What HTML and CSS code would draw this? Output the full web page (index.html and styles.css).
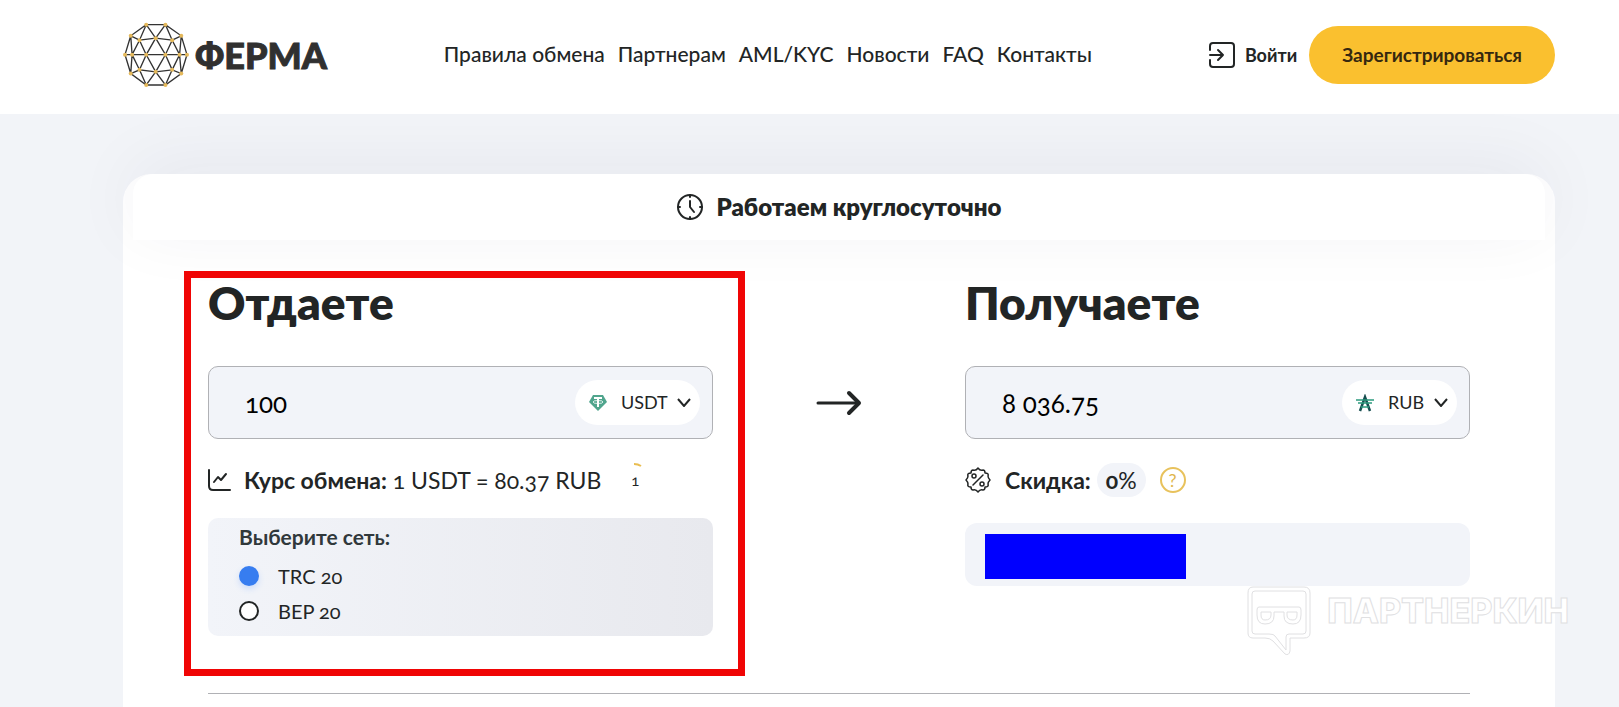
FILE: index.html
```
<!DOCTYPE html>
<html lang="ru">
<head>
    <meta charset="UTF-8">
    <meta name="viewport" content="width=device-width, initial-scale=1.0">
    <title>Ферма</title>
    <link rel="stylesheet" href="styles.css">
</head>
<body>
    <header class="header">
        <a class="logo" href="#">
            <svg class="logo-icon" viewBox="70 66 196 196" aria-hidden="true">
                <path class="logo-lines" d="M139 74H196L243 107L260 163L243 219L196 253H139L93 219L76 163L93 107ZM76 163H260M139 74L119 120L93 107M139 74L167 114L196 74L216 120L243 107M119 120L167 114L216 120M93 107L97 163L93 219M119 120L97 163M76 163L93 107M119 120L139 163L167 114L196 163L216 120L238 163L243 107M97 163L119 208L93 219M119 208L139 163L167 214L196 163L216 208L238 163L243 219L216 208L167 214L119 208L139 253L167 214L196 253L216 208"/>
                <g class="logo-dots">
                    <circle cx="139" cy="74" r="6"/><circle cx="196" cy="74" r="6"/>
                    <circle cx="93" cy="107" r="6"/><circle cx="167" cy="114" r="6"/><circle cx="243" cy="107" r="6"/>
                    <circle cx="119" cy="120" r="6"/><circle cx="216" cy="120" r="6"/>
                    <circle cx="76" cy="163" r="6"/><circle cx="97" cy="163" r="6"/><circle cx="139" cy="163" r="6"/>
                    <circle cx="196" cy="163" r="6"/><circle cx="238" cy="163" r="6"/><circle cx="260" cy="163" r="6"/>
                    <circle cx="119" cy="208" r="6"/><circle cx="216" cy="208" r="6"/>
                    <circle cx="93" cy="219" r="6"/><circle cx="167" cy="214" r="6"/><circle cx="243" cy="219" r="6"/>
                    <circle cx="139" cy="253" r="6"/><circle cx="196" cy="253" r="6"/>
                </g>
            </svg>
            <span class="logo-text">ФЕРМА</span>
        </a>
        <nav class="nav">
            <a href="#">Правила обмена</a>
            <a href="#">Партнерам</a>
            <a href="#">AML/KYC</a>
            <a href="#">Новости</a>
            <a href="#">FAQ</a>
            <a href="#">Контакты</a>
        </nav>
        <div class="actions">
            <a class="login" href="#">
                <svg class="icon" viewBox="0 0 26 26" aria-hidden="true"><path d="M1 8V4Q1 1 4 1H22Q25 1 25 4V22Q25 25 22 25H4Q1 25 1 22V18M1 13H14M9 8L14 13L9 18"/></svg>
                Войти
            </a>
            <button class="register" type="button">Зарегистрироваться</button>
        </div>
    </header>

    <main class="main">
        <section class="card">
            <div class="banner">
                <svg class="icon clock" viewBox="0 0 26 26" aria-hidden="true"><circle cx="13" cy="13" r="12"/><path d="M13 1V3M13 23V25M1 13H3M23 13H25M13 7V13L17 18"/></svg>
                Работаем круглосуточно
            </div>

            <form class="exchange">
                <div class="column column-marked">
                    <h2><label for="give">Отдаете</label></h2>
                    <div class="field">
                        <input class="amount" type="text" id="give" value="100">
                        <div class="currency">
                            <svg class="coin" viewBox="0 0 18 18" aria-hidden="true"><path fill="#50a58d" d="M4 1H14L18 8L9 17L0 8Z"/><path fill="#fff" d="M5 3H13V5H10V13H8V5H5Z"/><ellipse cx="9" cy="8" rx="5" ry="1.5" fill="none" stroke="#fff" stroke-width=".8"/></svg>
                            <select aria-label="Валюта отправки"><option>USDT</option></select>
                            <svg class="chevron" viewBox="0 0 14 9" aria-hidden="true"><path d="M1 1L7 8L13 1"/></svg>
                        </div>
                    </div>
                    <div class="info">
                        <svg class="icon chart" viewBox="0 0 24 24" aria-hidden="true"><path d="M1 2V18Q1 22 5 22H22M6 14L10 9L13 12L18 6"/></svg>
                        <span><b>Курс обмена:</b> 1 USDT = 80.37 RUB</span>
                        <span class="timer">
                            <svg class="timer-arc" viewBox="0 0 36 36" aria-hidden="true"><path d="M17 2Q21 2 24 4"/></svg>
                            1
                        </span>
                    </div>
                    <fieldset class="network">
                        <legend>Выберите сеть:</legend>
                        <label><input type="radio" name="network" checked> TRC 20</label>
                        <label><input type="radio" name="network"> BEP 20</label>
                    </fieldset>
                </div>

                <svg class="arrow" viewBox="0 0 46 26" aria-hidden="true"><path class="arrow-line" d="M2 13H42"/><path class="arrow-head" d="M33 3L43 13L33 23"/></svg>

                <div class="column">
                    <h2><label for="get">Получаете</label></h2>
                    <div class="field">
                        <input class="amount" type="text" id="get" value="8 036.75">
                        <div class="currency">
                            <svg class="coin" viewBox="0 0 18 18" aria-hidden="true"><path d="M4 17L9 3L14 17" fill="none" stroke="#174e50" stroke-width="2.5"/><path d="M0 6H18M2 9H16M5 13H13" stroke="#2c9b7d" stroke-width="1.4"/></svg>
                            <select aria-label="Валюта получения"><option>RUB</option></select>
                            <svg class="chevron" viewBox="0 0 14 9" aria-hidden="true"><path d="M1 1L7 8L13 1"/></svg>
                        </div>
                    </div>
                    <div class="info">
                        <svg class="icon discount" viewBox="0 0 26 26" aria-hidden="true"><path d="M13 1Q15 4 18 3Q20 3 20 6Q24 6 23 9Q23 11 25 13Q23 15 23 17Q24 20 20 20Q20 23 18 23Q15 22 13 25Q11 22 8 23Q6 23 6 20Q2 20 3 17Q3 15 1 13Q3 11 3 9Q2 6 6 6Q6 3 8 3Q11 4 13 1ZM8 18L18 8"/><circle cx="9" cy="9" r="2"/><circle cx="17" cy="17" r="2"/></svg>
                        <b>Скидка:</b>
                        <span class="percent"><b>0</b>%</span>
                        <button class="help" type="button" aria-label="Подробнее о скидке">?</button>
                    </div>
                    <div class="details">
                        <div class="hidden-value"></div>
                    </div>
                </div>
            </form>
            <hr class="divider">
        </section>

        <div class="watermark">
            <svg class="watermark-icon" viewBox="0 0 64 70" aria-hidden="true">
                <path d="M6 1H57Q63 1 63 7V47Q63 52 57 52H43V65Q42 70 38 68L26 55Q23 52 18 52H6Q1 52 1 47V7Q1 1 6 1Z"/>
                <path d="M8 5H56Q59 5 59 8V45Q59 48 56 48H42Q39 48 39 51V64L28 50Q27 48 22 48H8Q5 48 5 45V8Q5 5 8 5Z"/>
                <path d="M12 21H52Q54 21 54 24V29Q54 38 46 38Q37 38 37 30V26H27V30Q27 38 18 38Q10 38 10 29V24Q10 21 12 21Z"/>
                <path d="M14 26H24V29Q24 34 18 34Q14 34 14 29ZM40 26H50V29Q50 34 46 34Q40 34 40 29Z"/>
            </svg>
            <span class="watermark-text">ПАРТНЕРКИН</span>
        </div>
    </main>
</body>
</html>
```
FILE: styles.css
```
* {
    box-sizing: border-box;
}
body {
    margin: 0;
    min-height: 100vh;
    display: flex;
    flex-direction: column;
    background-color: #f2f4f8;
    color: #222525;
    font-family: Lato, "Open Sans", sans-serif;
    font-size: 20px;
    font-variant-numeric: oldstyle-nums;
}
a {
    color: inherit;
    text-decoration: none;
}
input, select, button {
    font: inherit;
    font-variant-numeric: inherit;
    color: inherit;
}
.icon {
    width: 26px;
    height: 26px;
    flex: none;
    fill: none;
    stroke: #222525;
    stroke-width: 2;
    stroke-linecap: round;
    stroke-linejoin: round;
}

/* header */
.header {
    display: flex;
    align-items: center;
    justify-content: space-between;
    height: 114px;
    padding: 0 64px 4px 123px;
    background-color: white;
}
.logo {
    display: flex;
    align-items: center;
    gap: 6px;
}
.logo-icon {
    width: 66px;
    height: 66px;
}
.logo-lines {
    fill: none;
    stroke: #333;
    stroke-width: 4;
}
.logo-dots {
    fill: #e5b95b;
}
.logo-text {
    font-size: 36px;
    line-height: 40px;
    font-weight: 900;
    color: #303030;
    -webkit-text-stroke: 1px #303030;
}
.nav {
    display: flex;
    gap: 13px;
    padding-bottom: 4px;
    font-size: 21px;
    font-weight: 500;
}
.actions {
    display: flex;
    align-items: center;
    gap: 12px;
}
.login {
    display: flex;
    align-items: center;
    gap: 10px;
    font-size: 18px;
    font-weight: 700;
}
.register {
    height: 58px;
    padding: 0 33px 2px;
    border: none;
    border-radius: 29px;
    background-color: #fac02f;
    font-size: 19px;
    font-weight: 700;
    color: #35280f;
}

/* exchange card */
.main {
    position: relative;
    flex: 1;
    display: flex;
    overflow: hidden;
    padding: 60px 64px 0 123px;
}
.card {
    flex: 1;
    border-radius: 28px 28px 0 0;
    background-color: white;
}
.banner {
    display: flex;
    align-items: center;
    justify-content: center;
    gap: 14px;
    height: 66px;
    margin: 0 10px;
    border-radius: 20px 20px 0 0;
    background-color: white;
    box-shadow: 0 -10px 70px rgba(40, 40, 60, 0.06);
    font-size: 24px;
    line-height: 28px;
    font-weight: 800;
}
.exchange {
    display: grid;
    grid-template-columns: 1fr 252px 1fr;
    padding: 36px 85px 0;
}
.column {
    position: relative;
    min-width: 0;
}
.column-marked::after {
    content: "";
    position: absolute;
    top: -5px;
    left: -24px;
    right: -32px;
    bottom: -40px;
    border: 7px solid #f00505;
    pointer-events: none;
}
h2 {
    margin: 0 0 36px;
    font-size: 46px;
    line-height: 54px;
    font-weight: 800;
}
.field {
    display: flex;
    align-items: center;
    height: 73px;
    padding: 0 12px 0 36px;
    border: 1px solid #b0b1b5;
    border-radius: 10px;
    background-color: #f2f4f9;
}
.amount {
    flex: 1;
    min-width: 0;
    padding: 0;
    border: none;
    outline: none;
    background: none;
    font-size: 26px;
    color: black;
}
.currency {
    display: flex;
    align-items: center;
    height: 45px;
    padding: 0 9px 0 14px;
    border-radius: 23px;
    background-color: white;
}
.currency select {
    margin: 0 9px 0 14px;
    padding: 0 0 2px;
    border: none;
    appearance: none;
    background: none;
    font-size: 18px;
}
.coin {
    width: 18px;
    height: 18px;
}
.chevron {
    width: 14px;
    height: 9px;
    fill: none;
    stroke: #222525;
    stroke-width: 2;
}
.info {
    display: flex;
    align-items: center;
    height: 34px;
    margin-top: 24px;
    font-size: 23px;
}
.info .icon {
    margin-right: 14px;
}
.info .chart {
    width: 24px;
    height: 24px;
    margin-right: 12px;
}
.info .discount {
    stroke-width: 1.5;
}
.timer {
    position: relative;
    width: 36px;
    margin-left: 16px;
    text-align: center;
    font-size: 15px;
}
.timer-arc {
    position: absolute;
    top: -9px;
    left: 0;
    width: 36px;
    height: 36px;
    fill: none;
    stroke: #e9bd51;
    stroke-width: 2;
}
.network {
    display: flex;
    flex-direction: column;
    height: 118px;
    margin: 21px 0 0;
    padding: 6px 31px;
    border: none;
    border-radius: 10px;
    background: linear-gradient(90deg, #f2f4f9, #e8e9ee);
}
.network legend {
    float: left;
    padding: 0;
    font-size: 21px;
    line-height: 26px;
    font-weight: 700;
    color: #30383b;
}
.network label {
    display: flex;
    align-items: center;
    gap: 19px;
    height: 35px;
}
.network legend + label {
    margin-top: 8px;
}
.network input {
    appearance: none;
    width: 20px;
    height: 20px;
    margin: 0;
    border: 2px solid #222525;
    border-radius: 50%;
    background-color: white;
}
.network input:checked {
    border-color: #377df0;
    background-color: #377df0;
    box-shadow: 0 3px 6px #cbdcfa;
}
.arrow {
    width: 46px;
    height: 26px;
    margin-top: 114px;
    justify-self: center;
    fill: none;
    stroke: #222525;
    stroke-linecap: round;
    stroke-linejoin: round;
}
.arrow-line {
    stroke-width: 3;
}
.arrow-head {
    stroke-width: 4;
}
.percent {
    height: 34px;
    margin: 0 14px 0 6px;
    padding: 0 9px;
    border-radius: 17px;
    background-color: #f2f4f9;
    line-height: 34px;
}
.help {
    width: 26px;
    height: 26px;
    padding: 0;
    border: 2px solid #e8c25c;
    border-radius: 50%;
    background: none;
    font-size: 18px;
    line-height: 20px;
    color: #e0b64e;
}
.details {
    height: 63px;
    margin-top: 26px;
    padding: 11px 20px;
    border-radius: 12px;
    background-color: #f2f4f9;
}
.hidden-value {
    width: 201px;
    height: 45px;
    background-color: #0000ff;
}
.divider {
    height: 1px;
    margin: 57px 85px 12px;
    border: none;
    background-color: #b0b1b5;
}

/* watermark over the card corner */
.watermark {
    position: absolute;
    right: 50px;
    bottom: 51px;
    display: flex;
    align-items: flex-start;
    gap: 16px;
    pointer-events: none;
}
.watermark-icon {
    width: 64px;
    height: 70px;
    fill: none;
    stroke: #e0e0e2;
}
.watermark-text {
    padding-top: 5px;
    font-family: Inter, sans-serif;
    font-size: 34px;
    line-height: 40px;
    font-weight: 800;
    color: white;
    -webkit-text-stroke: 1px #e0e0e2;
}
```
